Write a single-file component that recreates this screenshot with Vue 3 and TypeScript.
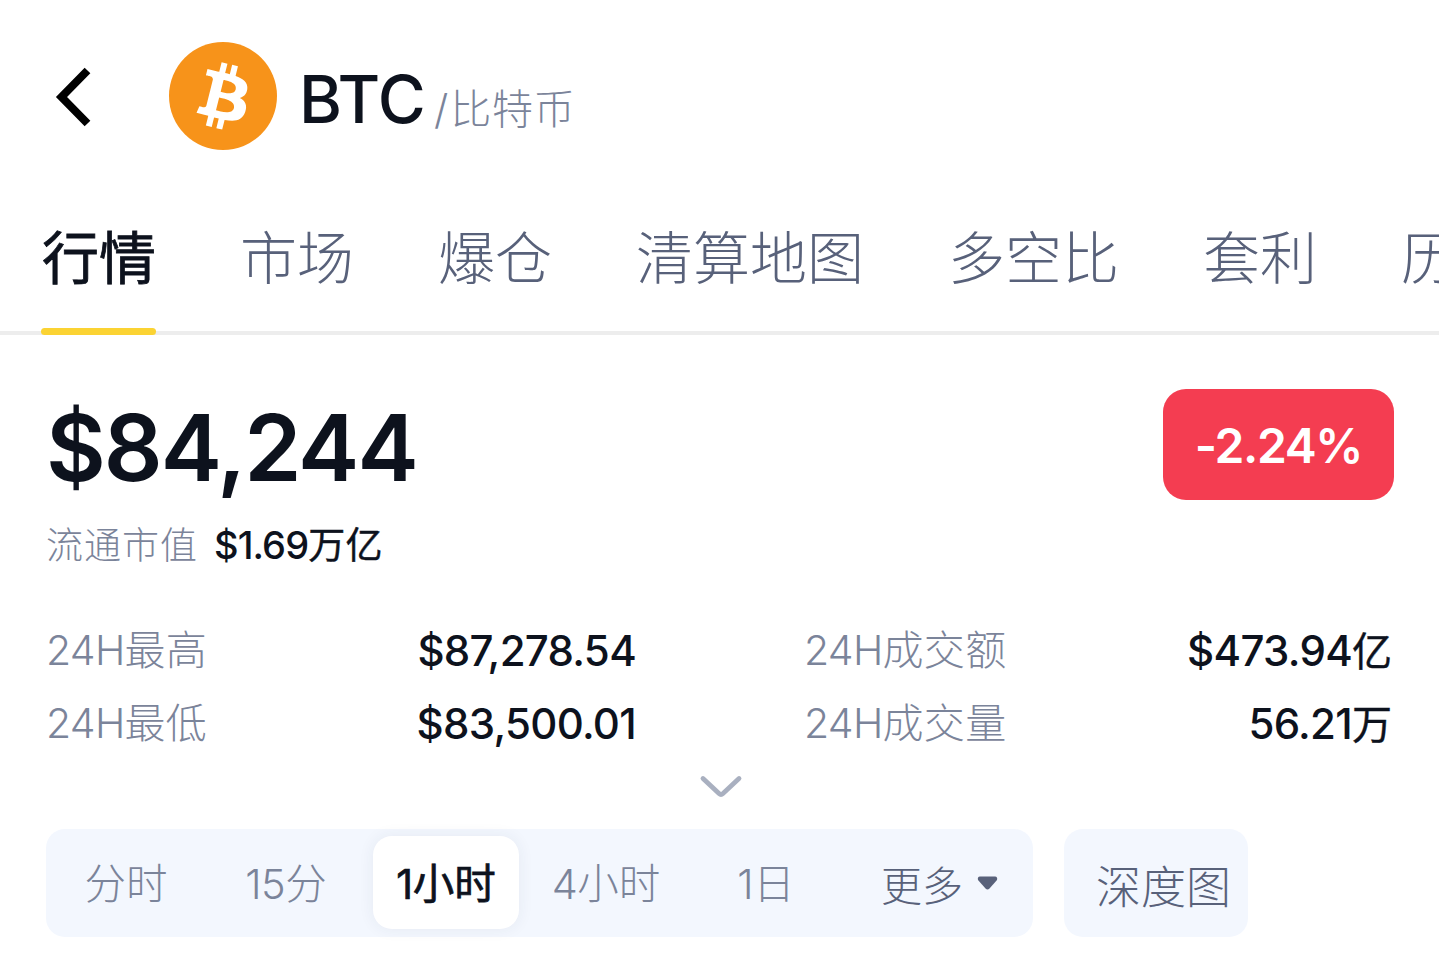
<script setup lang="ts">
interface Stat {
  prefix: string
  label: string
  value: string
  unit: string
}

const tabs: string[] = ['行情', '市场', '爆仓', '清算地图', '多空比', '套利', '历史']

const stats: Stat[] = [
  { prefix: '24H', label: '最高', value: '$87,278.54', unit: '' },
  { prefix: '24H', label: '成交额', value: '$473.94', unit: '亿' },
  { prefix: '24H', label: '最低', value: '$83,500.01', unit: '' },
  { prefix: '24H', label: '成交量', value: '56.21', unit: '万' },
]

const periods = [
  { num: '', text: '分时' },
  { num: '15', text: '分' },
  { num: '1', text: '小时' },
  { num: '4', text: '小时' },
  { num: '1', text: '日' },
]
const activePeriod = 2
</script>

<template>
  <main class="page">
    <header class="header">
      <svg class="back" width="36" height="60" viewBox="0 0 36 60">
        <path d="M32.5 3.5 L6.5 30 L32.5 56.5" fill="none" stroke="#000" stroke-width="8" />
      </svg>
      <svg class="coin" width="108" height="108" viewBox="0 0 32 32">
        <circle cx="16" cy="16" r="16" fill="#f7931a" />
        <path
          fill="#fff"
          d="M23.189 14.02c.314-2.096-1.283-3.223-3.465-3.975l.708-2.84-1.728-.43-.69 2.765c-.454-.114-.92-.22-1.385-.326l.695-2.783L15.596 6l-.708 2.839c-.376-.086-.746-.17-1.104-.26l.002-.009-2.384-.595-.46 1.846s1.283.294 1.256.312c.7.175.826.638.805 1.006l-.806 3.235c.048.012.11.03.18.057l-.183-.045-1.13 4.532c-.086.212-.303.531-.793.41.018.025-1.256-.313-1.256-.313l-.858 1.978 2.25.561c.418.105.828.215 1.231.318l-.715 2.872 1.727.43.708-2.84c.472.127.93.245 1.378.357l-.706 2.828 1.728.43.715-2.866c2.948.558 5.164.333 6.097-2.333.752-2.146-.037-3.385-1.588-4.192 1.13-.26 1.98-1.003 2.207-2.538zm-3.95 5.538c-.533 2.147-4.148.986-5.32.695l.95-3.805c1.172.293 4.929.872 4.37 3.11zm.535-5.569c-.487 1.953-3.495.96-4.47.717l.86-3.45c.975.243 4.118.696 3.61 2.733z"
        />
      </svg>
      <h1 class="symbol">BTC</h1>
      <span class="name"><span class="slash">/</span>比特币</span>
    </header>

    <nav class="tabs">
      <a v-for="(tab, i) in tabs" :key="tab" class="tab" :class="{ active: i === 0 }">{{ tab }}</a>
    </nav>

    <section class="quote">
      <div class="price">$84,244</div>
      <div class="change">-2.24%</div>
    </section>

    <div class="cap">
      <span class="cap-label">流通市值</span>
      <span class="cap-value">$1.69<span class="cap-unit">万亿</span></span>
    </div>

    <section class="stats">
      <div v-for="s in stats" :key="s.label" class="stat">
        <span class="stat-label"><span class="thin">{{ s.prefix }}</span>{{ s.label }}</span>
        <span class="stat-value">{{ s.value }}<span v-if="s.unit" class="stat-unit">{{ s.unit }}</span></span>
      </div>
    </section>

    <div class="expand">
      <svg width="44" height="26" viewBox="0 0 44 26">
        <path d="M4 4.5 L20 19.5 Q22 21.3 24 19.5 L40 4.5" fill="none" stroke="#a9b0c0" stroke-width="4.8" stroke-linecap="round" />
      </svg>
    </div>

    <section class="toolbar">
      <div class="periods">
        <button v-for="(p, i) in periods" :key="i" class="period" :class="{ active: i === activePeriod }">
          <span class="pill"><span v-if="p.num" class="num">{{ p.num }}</span>{{ p.text }}</span>
        </button>
        <button class="more">
          <span>更多</span>
          <svg width="22" height="16" viewBox="0 0 22 16">
            <path d="M3 1.5 H18 Q20.8 1.5 20 5 L12.5 13.4 Q10.5 15.4 8.5 13.4 L1 5 Q0.2 1.5 3 1.5 Z" fill="#58617a" />
          </svg>
        </button>
      </div>
      <button class="depth">深度图</button>
    </section>
  </main>
</template>

<style>
body {
  background: #fff;
  overflow: hidden;
}
</style>

<style scoped>
.page {
  width: 1439px;
  height: 967px;
  overflow: hidden;
  background: #fff;
  color: #0d121d;
  font-family: Inter, 'Noto Sans CJK SC', sans-serif;
  white-space: nowrap;
}
button {
  border: 0;
  padding: 0;
  margin: 0;
  background: none;
  font-family: inherit;
}
.header {
  display: flex;
  align-items: center;
  height: 192px;
  padding-left: 55px;
}
.back {
  margin-top: 2px;
}
.coin {
  margin-left: 78px;
}
.symbol {
  margin: 7px 0 0 22px;
  width: 135px;
  font-size: 65.5px;
  font-weight: 500;
  line-height: 80px;
  letter-spacing: -0.7px;
}
.name {
  margin-top: 25px;
  font-size: 41px;
  font-weight: 300;
  line-height: 60px;
  letter-spacing: 0.7px;
  color: #7b849a;
}
.slash {
  letter-spacing: 2px;
}
.tabs {
  display: flex;
  gap: 84px;
  box-sizing: border-box;
  height: 143px;
  padding-left: 42px;
  border-bottom: 4px solid #ededed;
}
.tab {
  flex: none;
  height: 139px;
  font-size: 57px;
  font-weight: 300;
  line-height: 133px;
  color: #58617a;
}
.tab.active {
  position: relative;
  font-weight: 400;
  -webkit-text-stroke: 0.8px #0d121d;
  color: #0d121d;
}
.tab.active::after {
  content: '';
  position: absolute;
  left: -1px;
  right: 0;
  bottom: -4px;
  height: 7px;
  border-radius: 4px;
  background: #fbd333;
}
.quote {
  display: flex;
  justify-content: space-between;
  padding: 54px 45px 0 46px;
  height: 121px;
}
.price {
  font-size: 92px;
  font-weight: 600;
  line-height: 118px;
  letter-spacing: -2px;
}
.change {
  width: 231px;
  height: 111px;
  border-radius: 23px;
  background: #f43d51;
  color: #fff;
  font-size: 48px;
  font-weight: 600;
  line-height: 114px;
  letter-spacing: -1.4px;
  text-align: center;
}
.cap {
  display: flex;
  align-items: center;
  height: 66px;
  padding-bottom: 4px;
  padding-left: 46px;
  font-size: 38px;
}
.cap-label {
  width: 168px;
  font-size: 37px;
  font-weight: 300;
  letter-spacing: 1px;
  color: #7b849a;
}
.cap-value {
  font-weight: 500;
  letter-spacing: -0.9px;
}
.cap-unit {
  font-size: 37px;
  font-weight: 400;
  letter-spacing: 0.3px;
  -webkit-text-stroke: 0.4px #0d121d;
}
.stats {
  display: grid;
  grid-template-columns: 590px 588px;
  column-gap: 168px;
  grid-auto-rows: 73px;
  padding: 34px 0 0 46px;
}
.stat {
  display: flex;
  justify-content: space-between;
  line-height: 73px;
}
.stat-label {
  font-size: 41px;
  font-weight: 300;
  letter-spacing: 0.3px;
  color: #7b849a;
}
.thin {
  letter-spacing: -0.7px;
}
.stat-value {
  font-size: 42px;
  font-weight: 500;
  letter-spacing: -0.7px;
}
.stat-unit {
  font-size: 40px;
  font-weight: 400;
  letter-spacing: 0;
  -webkit-text-stroke: 0.4px #0d121d;
}
.expand {
  display: flex;
  justify-content: center;
  height: 55px;
  padding: 14px 0 0 3px;
  box-sizing: border-box;
}
.toolbar {
  display: flex;
  gap: 31px;
  padding-left: 46px;
  margin-top: 14px;
}
.periods {
  display: flex;
  width: 987px;
  height: 108px;
  border-radius: 19px;
  background: #f3f7fe;
}
.period {
  display: flex;
  align-items: flex-start;
  justify-content: center;
  width: 160px;
  padding-top: 7px;
  font-size: 41.5px;
  font-weight: 300;
  color: #7b849a;
}
.pill {
  display: block;
  width: 146px;
  height: 93px;
  border-radius: 19px;
  line-height: 97px;
}
.period.active .pill {
  background: #fff;
  color: #0d121d;
  font-weight: 400;
  -webkit-text-stroke: 0.7px #0d121d;
  box-shadow: 0 0 16px rgba(40, 60, 90, 0.07);
}
.num {
  letter-spacing: -0.5px;
}
.more {
  display: flex;
  align-items: center;
  gap: 14px;
  padding-left: 35px;
  font-size: 41px;
  font-weight: 300;
  color: #58617a;
}
.depth {
  box-sizing: border-box;
  width: 184px;
  height: 108px;
  padding: 2px 0 0 15px;
  border-radius: 19px;
  background: #f3f7fe;
  font-size: 45px;
  font-weight: 300;
  color: #58617a;
}
</style>
